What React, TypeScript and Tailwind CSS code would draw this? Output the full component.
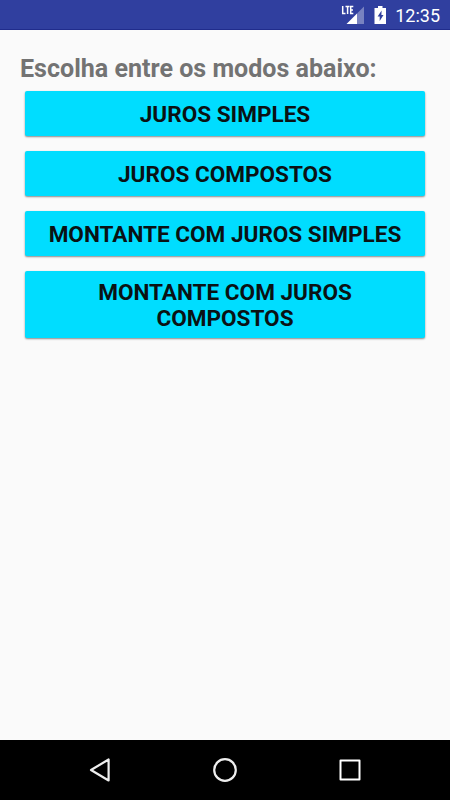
import React from 'react';

const modes = ['Juros simples', 'Juros compostos', 'Montante com juros simples', 'Montante com juros compostos'];

function StatusBar() {
  return (
    <header className="flex h-[30px] items-start justify-end border-b border-[#202c8c] bg-[#303f9f] pr-2.5 text-white">
      <svg className="h-[30px] w-[60px]" viewBox="0 0 60 30" fill="none">
        <path d="M7.7 6v7.4h2.8M10.5 6.6h4M12.6 6v8M18.3 6.6h-2.6v6.8h2.6M15.7 9.9h2.3" stroke="#fff" strokeWidth="1.5" />
        <path d="M29 6.5V24h-7V13.5z" fill="#fff" fillOpacity="0.35" />
        <path d="M22 13.5V24H11.5z" fill="#fff" />
        <path fillRule="evenodd" d="M43 6h4.5v2H51v16H39.5V8H43zM46.6 10.5l-4 6h2.1v4.5l3.8-6h-2.1z" fill="#fff" />
      </svg>
      <span className="text-[18px] leading-[31px]">12:35</span>
    </header>
  );
}

function NavBar() {
  return (
    <nav className="flex h-[60px] items-center justify-center gap-[95px] bg-black">
      <svg className="size-[30px]" viewBox="0 0 30 30" fill="none" stroke="#eee" strokeWidth="2.2" strokeLinejoin="round">
        <path d="M23.6 4.5v21L6 15z" />
      </svg>
      <svg className="size-[30px]" viewBox="0 0 30 30" fill="none" stroke="#eee" strokeWidth="2.2">
        <circle cx="15" cy="15" r="10.8" />
      </svg>
      <svg className="size-[30px]" viewBox="0 0 30 30" fill="none" stroke="#fff" strokeWidth="2" strokeLinejoin="round">
        <path d="M5.5 5.5h19v19h-19z" />
      </svg>
    </nav>
  );
}

export default function App() {
  return (
    <div className="flex h-screen flex-col bg-[#fafafa] font-[Roboto,sans-serif]">
      <StatusBar />
      <main className="flex-1 px-[25px] pt-6">
        <h1 className="-ml-[5px] text-[25.05px] leading-[30px] font-bold text-[#737373]">Escolha entre os modos abaixo:</h1>
        <div className="mt-[7px] flex flex-col gap-[15px]">
          {modes.map((mode) => (
            <button
              key={mode}
              className="min-h-[45px] rounded-[2px] bg-[#00ddff] px-2.5 pt-[9px] pb-1.5 text-[22.55px] leading-[26px] font-bold text-[#0a1214] uppercase shadow-[0_1px_2px_rgba(0,0,0,0.45)]"
            >
              {mode}
            </button>
          ))}
        </div>
      </main>
      <NavBar />
    </div>
  );
}
